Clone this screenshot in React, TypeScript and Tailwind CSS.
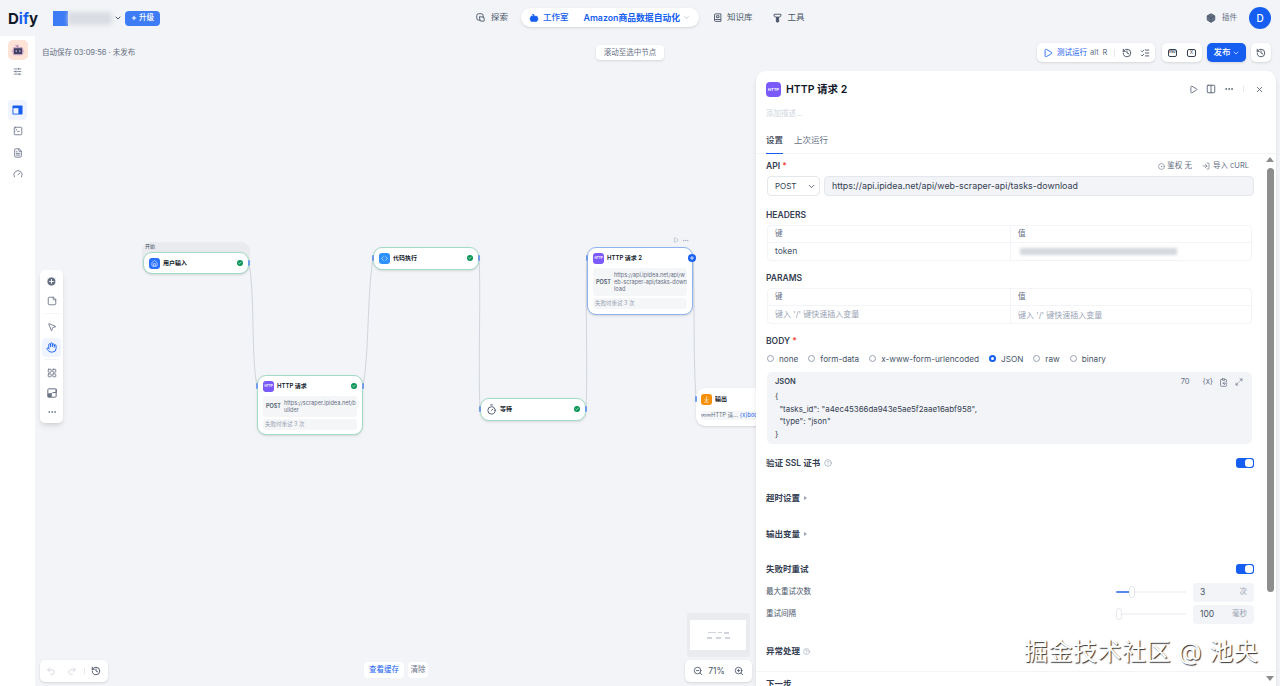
import {
  Bot,
  Box,
  Check,
  ChevronDown,
  CircleDot,
  CircleHelp,
  CirclePlus,
  ClipboardCopy,
  Code,
  Columns2,
  Ellipsis,
  FileText,
  Gauge,
  Hand,
  History,
  House,
  LayoutGrid,
  ListChecks,
  LogIn,
  Maximize2,
  MousePointer2,
  Play,
  Plus,
  Redo2,
  SlidersHorizontal,
  SquareTerminal,
  StickyNote,
  Timer,
  Undo2,
  X,
  ZoomIn,
  ZoomOut,
  ArrowDownToLine,
} from 'lucide-react';

function StatusDot() {
  return (
    <span className="flex h-[6px] w-[6px] shrink-0 items-center justify-center rounded-full bg-[#079455]">
      <Check size={4} strokeWidth={4} className="text-white" />
    </span>
  );
}

function Port({ className }: { className: string }) {
  return <span className={`absolute h-[6px] w-[2px] rounded-sm bg-[#6f9be8] ${className}`} />;
}

function HttpIcon() {
  return (
    <span className="flex h-[11px] w-[11px] shrink-0 items-center justify-center rounded-[3px] bg-[#7a5af8] text-[3px] font-bold text-white">
      HTTP
    </span>
  );
}

function NodeTitle({ icon, title, dot = true }: { icon: React.ReactNode; title: string; dot?: boolean }) {
  return (
    <div className="flex h-[20px] items-center px-[5px]">
      {icon}
      <span className="ml-[3px] flex-1 truncate text-[6px] leading-none font-semibold text-[#101828]">{title}</span>
      {dot && <StatusDot />}
    </div>
  );
}

function HttpBody({ url }: { url: string }) {
  return (
    <div className="px-[5px]">
      <div className="flex items-center gap-[3px] rounded-[3px] bg-[#f5f6f8] py-[3.5px] pl-[3px]">
        <span className="text-[5.5px] font-semibold text-[#475467]">POST</span>
        <span className="min-w-0 flex-1 break-all text-[5.6px] leading-[7px] text-[#667085]">{url}</span>
      </div>
      <div className="mt-[2px] flex h-[11px] items-center rounded-[3px] bg-[#f5f6f8] px-[2px] text-[5.5px] text-[#98a2b3]">
        失败时重试 3 次
      </div>
    </div>
  );
}

function ExploreIcon() {
  return (
    <svg width="9" height="9" viewBox="0 0 12 12" fill="none" stroke="currentColor" strokeWidth="1.2">
      <rect x="1" y="1" width="8.5" height="8.5" rx="2.5" />
      <path d="M4.5 5 L10.5 5.5 L11 10 Q11 11 10 11 L5.5 10.5 Z" fill="#f2f4f7" />
    </svg>
  );
}

function BookIcon() {
  return (
    <svg width="9" height="10" viewBox="0 0 12 13" fill="none" stroke="currentColor" strokeWidth="1.2">
      <path d="M2 2.5 Q2 1 3.5 1 H10.5 V11 H3.5 Q2 11 2 9.5 Z" />
      <path d="M2 9.5 Q2 8.5 3.5 8.5 H10.5" />
      <path d="M4.5 3.5 H8 V6 H4.5 Z" />
    </svg>
  );
}

function ToolIcon() {
  return (
    <svg width="9" height="10" viewBox="0 0 12 13" fill="none" stroke="currentColor" strokeWidth="1.2">
      <path d="M1.5 1.5 H10.5 V4 L8 5.5 H4 L1.5 4 Z" />
      <path d="M4.5 5.5 H7.5 V11.5 Q6 12.5 4.5 11.5 Z" fill="currentColor" />
    </svg>
  );
}

function AppWindowIcon() {
  return (
    <svg width="11" height="10" viewBox="0 0 12 11">
      <rect x="0.5" y="0.5" width="11" height="10" rx="1" fill="#155eef" />
      <rect x="1.5" y="3.5" width="5.5" height="6" fill="#eff4ff" />
    </svg>
  );
}

function MinimapIcon() {
  return (
    <svg width="10" height="10" viewBox="0 0 12 12" fill="none" stroke="currentColor" strokeWidth="1.2">
      <rect x="1" y="1" width="10" height="10" rx="1" />
      <path d="M6.5 5.5 H11 V1 M1 11 L6 6" />
      <path d="M1.5 10.5 V7 H5 V10.5 Z" fill="currentColor" />
    </svg>
  );
}

function Canvas() {
  const nodeBase = 'absolute w-[106px] rounded-[9px] border-[1.5px] border-[#a3dcc6] bg-white shadow-sm';
  return (
    <>
      {/* edges */}
      <svg className="absolute left-0 top-0 h-[650px] w-[760px]" viewBox="0 0 760 650" fill="none">
        <g stroke="#d0d5dd" strokeWidth="1">
          <path d="M214 227 C220 260 216 320 222 350" />
          <path d="M328 350 C334 320 332 260 338 222" />
          <path d="M444 222 C446 260 443 330 445 373" />
          <path d="M551 373 C553 330 550 260 552 222" />
          <path d="M658 222 C660 270 658 320 661 362" />
        </g>
      </svg>

      {/* 开始 */}
      <div className="absolute left-[107px] top-[206px] h-[32px] w-[108px] rounded-[9px] bg-[#e9ebef]">
        <span className="absolute left-[3px] top-[1px] text-[5px] leading-[7px] text-[#475467]">开始</span>
      </div>
      <div className={`${nodeBase} left-[108px] top-[216px] h-[22px]`}>
        <NodeTitle
          title="用户输入"
          icon={
            <span className="flex h-[11px] w-[11px] items-center justify-center rounded-[3px] bg-[#2970ff]">
              <House size={7} className="text-white" />
            </span>
          }
        />
        <Port className="right-[-2px] top-[7px]" />
      </div>

      <div className={`${nodeBase} left-[222px] top-[339px] h-[60px]`}>
        <NodeTitle title="HTTP 请求" icon={<HttpIcon />} />
        <HttpBody url="https://scraper.ipidea.net/builder" />
        <Port className="left-[-2px] top-[7px]" />
        <Port className="right-[-2px] top-[7px]" />
      </div>

      <div className={`${nodeBase} left-[338px] top-[211px] h-[23px]`}>
        <NodeTitle
          title="代码执行"
          icon={
            <span className="flex h-[11px] w-[11px] items-center justify-center rounded-[3px] bg-[#2e90fa]">
              <Code size={7} className="text-white" />
            </span>
          }
        />
        <Port className="left-[-2px] top-[7px]" />
        <Port className="right-[-2px] top-[7px]" />
      </div>

      <div className={`${nodeBase} left-[445px] top-[362px] h-[23px]`}>
        <NodeTitle title="等待" icon={<Timer size={11} className="text-[#475467]" />} />
        <Port className="left-[-2px] top-[7px]" />
        <Port className="right-[-2px] top-[7px]" />
      </div>

      {/* selected node */}
      <div className="absolute left-[638px] top-[201px] flex h-[6px] items-center gap-[3px] text-[#98a2b3]">
        <Play size={6} />
        <Ellipsis size={7} />
      </div>
      <div className="absolute left-[552px] top-[211px] h-[68px] w-[106px] rounded-[9px] border-[1.5px] border-[#8fb3f0] bg-white shadow-sm">
        <NodeTitle title="HTTP 请求 2" icon={<HttpIcon />} dot={false} />
        <HttpBody url="https://api.ipidea.net/api/web-scraper-api/tasks-download" />
        <Port className="left-[-2px] top-[7px]" />
        <span className="absolute right-[-4px] top-[6px] flex h-[8px] w-[8px] items-center justify-center rounded-full bg-[#155eef]">
          <Plus size={6} strokeWidth={3} className="text-white" />
        </span>
      </div>

      {/* output node, runs under the panel */}
      <div className="absolute left-[661px] top-[352px] h-[38px] w-[70px] rounded-[9px] bg-white pt-px shadow-sm">
        <NodeTitle
          title="输出"
          dot={false}
          icon={
            <span className="flex h-[11px] w-[11px] items-center justify-center rounded-[3px] bg-[#f79009]">
              <ArrowDownToLine size={7} className="text-white" />
            </span>
          }
        />
        <div className="mx-[5px] mt-[2px] flex h-[9px] items-center gap-[2px] overflow-hidden whitespace-nowrap rounded-[2px] bg-[#f5f6f8] text-[5.5px] text-[#667085]">
          <span>∞∞HTTP 请...</span>
          <span className="text-[#155eef]">{'{x}'}body</span>
        </div>
        <Port className="left-[-1px] top-[8px]" />
      </div>

      {/* auto save */}
      <div className="absolute left-[7px] top-[12px] text-[7.5px] leading-[10px] text-[#667085]">自动保存 03:09:56 · 未发布</div>

      {/* scroll to selected */}
      <div className="absolute left-[561px] top-[9px] flex h-[15px] w-[68px] items-center justify-center rounded-[4px] bg-white text-[7.5px] text-[#667085] shadow-sm">
        滚动至选中节点
      </div>

      {/* run buttons */}
      <div className="absolute left-[1002px] top-[7px] flex items-center gap-[5px]">
        <div className="flex h-[19px] w-[118px] items-center rounded-[5px] bg-white pl-[6px] shadow-sm">
          <Play size={10} className="text-[#155eef]" />
          <span className="ml-[4px] text-[7.5px] text-[#155eef]">测试运行</span>
          <span className="ml-[3px] text-[7.5px] text-[#667085]">alt</span>
          <span className="ml-[4px] text-[7.5px] text-[#667085]">R</span>
          <span className="mx-[7px] h-[8px] w-px bg-[#e4e7ec]" />
          <History size={10} className="text-[#354052]" />
          <ListChecks size={10} className="ml-[8px] text-[#354052]" />
        </div>
        <div className="ml-[2px] flex h-[19px] w-[40px] items-center justify-center gap-[10px] rounded-[5px] bg-white shadow-sm">
          <span className="flex h-[8px] w-[9px] items-center justify-center rounded-[2px] border border-[#354052] text-[3px] font-bold text-[#354052]">
            ENV
          </span>
          <span className="flex h-[8px] w-[9px] items-center justify-center rounded-[2px] border border-[#354052] text-[5px] text-[#354052]">
            X
          </span>
        </div>
        <div className="flex h-[19px] w-[39px] items-center justify-center gap-[1px] rounded-[5px] bg-[#155eef] text-[8.5px] font-medium text-white shadow-sm">
          发布
          <ChevronDown size={8} />
        </div>
        <div className="flex h-[19px] w-[20px] items-center justify-center rounded-[5px] bg-white shadow-sm">
          <History size={10} className="text-[#354052]" />
        </div>
      </div>

      {/* left tools */}
      <div className="absolute left-[5px] top-[234px] flex w-[23px] flex-col items-center rounded-[5px] bg-white py-px text-[#676f83] shadow-md">
        <div className="flex h-[20px] items-center justify-center">
          <CirclePlus size={11} fill="#676f83" stroke="white" />
        </div>
        <div className="flex h-[20px] items-center justify-center">
          <StickyNote size={10} strokeDasharray="3 1.5" />
        </div>
        <div className="my-[2px] h-px w-[14px] bg-[#f2f4f7]" />
        <div className="flex h-[22px] items-center justify-center">
          <MousePointer2 size={10} />
        </div>
        <div className="flex h-[19px] w-[19px] items-center justify-center rounded-[4px] bg-[#eff4ff]">
          <Hand size={11} className="text-[#155eef]" />
        </div>
        <div className="my-[2px] h-px w-[14px] bg-[#f2f4f7]" />
        <div className="flex h-[21px] items-center justify-center">
          <LayoutGrid size={10} />
        </div>
        <div className="flex h-[19px] items-center justify-center">
          <MinimapIcon />
        </div>
        <div className="flex h-[20px] items-center justify-center">
          <Ellipsis size={10} />
        </div>
      </div>

      {/* undo bar */}
      <div className="absolute left-[5px] top-[624px] flex h-[22px] w-[68px] items-center rounded-[5px] bg-white pl-[6px] shadow-sm">
        <Undo2 size={10} className="text-[#d0d5dd]" />
        <Redo2 size={10} className="ml-[11px] text-[#d0d5dd]" />
        <span className="ml-[7px] h-[6px] w-px bg-[#e4e7ec]" />
        <History size={10} className="ml-[6px] text-[#354052]" />
      </div>

      {/* cache */}
      <div className="absolute left-[329px] top-[626px] flex items-center gap-[4px] text-[7.5px]">
        <span className="flex h-[16px] w-[40px] items-center justify-center rounded-[4px] bg-white text-[#155eef]">查看缓存</span>
        <span className="flex h-[16px] w-[20px] items-center justify-center rounded-[4px] bg-white text-[#667085]">清除</span>
      </div>

      {/* minimap + zoom */}
      <div className="absolute left-[652px] top-[577px] h-[44px] w-[63px] rounded-[3px] bg-[#e9ebef]" />
      <div className="absolute left-[655px] top-[584px] flex h-[30px] w-[56px] flex-col items-center justify-center gap-[3px] bg-white">
        <div className="flex gap-[2px]">
          <span className="h-[1px] w-[8px] bg-[#d0d5dd]" />
          <span className="h-[1px] w-[4px] bg-[#d0d5dd]" />
          <span className="h-[2px] w-[5px] bg-[#d0d5dd]" />
        </div>
        <div className="flex gap-[4px]">
          <span className="h-[2px] w-[5px] bg-[#d0d5dd]" />
          <span className="h-[2px] w-[5px] bg-[#d0d5dd]" />
          <span className="h-[2px] w-[5px] bg-[#d0d5dd]" />
        </div>
      </div>
      <div className="absolute left-[650px] top-[624px] flex h-[22px] w-[67px] items-center justify-center gap-[5px] rounded-[5px] bg-white text-[8.5px] text-[#475467] shadow-sm">
        <ZoomOut size={10} />
        <span>71%</span>
        <ZoomIn size={10} className="ml-[4px]" />
      </div>
    </>
  );
}

function FieldLabel({ children, className = '' }: { children: React.ReactNode; className?: string }) {
  return <div className={`text-[8.5px] leading-[12px] font-semibold text-[#354052] ${className}`}>{children}</div>;
}

function KvTable({ rows }: { rows: React.ReactNode }) {
  return (
    <div className="mt-[4px] ml-px w-[485px] rounded-[4px] border border-[#f2f4f7] text-[8.5px]">
      <div className="flex h-[17px] items-center border-b border-[#f2f4f7] text-[7.5px] text-[#667085]">
        <span className="w-[243px] border-r border-[#f2f4f7] pl-[7px] leading-[16px]">键</span>
        <span className="pl-[7px]">值</span>
      </div>
      {rows}
    </div>
  );
}

function Radio({ label, on = false }: { label: string; on?: boolean }) {
  return (
    <div className="flex items-center gap-[5px]">
      <span
        className={`h-[7px] w-[7px] rounded-full border ${on ? 'border-[2px] border-[#155eef] bg-white' : 'border-[#98a2b3]'}`}
      />
      <span className="text-[8.2px] leading-none text-[#475467]">{label}</span>
    </div>
  );
}

function Toggle() {
  return (
    <span className="flex h-[10px] w-[18px] items-center justify-end rounded-[3px] bg-[#155eef] pr-px">
      <span className="h-[8px] w-[8px] rounded-[3px] bg-white" />
    </span>
  );
}

function SliderRow({
  label,
  value,
  unit,
  fill,
  thumb,
}: {
  label: string;
  value: string;
  unit: string;
  fill: string;
  thumb: string;
}) {
  return (
    <div className="flex h-[22px] items-center">
      <span className="flex-1 text-[7.5px] text-[#475467]">{label}</span>
      <div className="relative mr-[7px] h-[2px] w-[70px] rounded-full bg-[#f2f4f7]">
        <div className={`absolute left-0 top-0 h-[2px] rounded-full bg-[#5a86e8] ${fill}`} />
        <span className={`absolute top-[-5px] h-[12px] w-[6px] rounded-[3px] border border-[#e4e7ec] bg-white ${thumb}`} />
      </div>
      <div className="flex h-[19px] w-[61px] items-center justify-between rounded-[4px] bg-[#f2f4f7] px-[7px] text-[8.5px] text-[#475467]">
        <span>{value}</span>
        <span className="text-[7.5px] text-[#98a2b3]">{unit}</span>
      </div>
    </div>
  );
}

function Panel() {
  return (
    <div className="absolute bottom-0 left-[721px] top-[35px] flex w-[520px] flex-col overflow-hidden rounded-t-[10px] bg-white shadow-md">
      <div className="flex h-[26px] shrink-0 items-end px-[10px]">
        <span className="flex h-[15px] w-[15px] items-center justify-center rounded-[4px] bg-[#7a5af8] text-[4px] font-bold text-white">
          HTTP
        </span>
        <span className="ml-[5px] text-[10.5px] leading-[15px] font-semibold text-[#101828]">HTTP 请求 2</span>
        <div className="ml-auto flex items-center pb-[3px] text-[#475467]">
          <Play size={9} />
          <Columns2 size={10} className="ml-[8px]" />
          <Ellipsis size={10} className="ml-[8px]" />
          <span className="ml-[9px] h-[6px] w-px bg-[#e4e7ec]" />
          <X size={9} className="ml-[11px] mr-[2px]" />
        </div>
      </div>
      <div className="mt-[11px] h-[12px] shrink-0 px-[10px] text-[7.5px] leading-[12px] text-[#d0d5dd]">添加描述...</div>
      <div className="mt-[12px] flex h-[22px] shrink-0 gap-[11px] border-b border-[#f2f4f7] px-[10px] text-[8.5px] leading-[14px]">
        <span className="h-[22px] border-b border-[#155eef] pt-px font-medium text-[#354052]">设置</span>
        <span className="pt-px text-[#667085]">上次运行</span>
      </div>

      <div className="relative min-h-0 flex-1 overflow-hidden pl-[10px] pr-[22px]">
        <div className="mt-[6px] flex h-[12px] items-center">
          <FieldLabel>
            API <span className="text-[#f04438]">*</span>
          </FieldLabel>
          <div className="ml-auto mr-[5px] flex items-center text-[7.5px] text-[#667085]">
            <CircleDot size={7} />
            <span className="ml-[2px]">鉴权 无</span>
            <LogIn size={8} className="ml-[10px]" />
            <span className="ml-[3px]">导入 cURL</span>
          </div>
        </div>
        <div className="mt-[4px] flex gap-[4px] pl-px">
          <div className="flex h-[20px] w-[53px] items-center justify-between rounded-[4px] border border-[#e4e7ec] pl-[7px] pr-[3px] text-[8px] text-[#354052]">
            POST
            <ChevronDown size={9} />
          </div>
          <div className="flex h-[20px] w-[430px] items-center rounded-[4px] border border-[#e4e7ec] bg-[#f2f4f7] pl-[7px] text-[8.9px] text-[#354052]">
            https://api.ipidea.net/api/web-scraper-api/tasks-download
          </div>
        </div>

        <FieldLabel className="mt-[13px]">HEADERS</FieldLabel>
        <KvTable
          rows={
            <div className="flex h-[17px] items-center text-[#475467]">
              <span className="w-[243px] border-r border-[#f2f4f7] pl-[7px] leading-[17px]">token</span>
              <div className="ml-[9px] h-[7px] w-[157px] bg-[#d5d8dd] blur-[1.5px]" />
            </div>
          }
        />

        <FieldLabel className="mt-[11px]">PARAMS</FieldLabel>
        <KvTable
          rows={
            <div className="flex h-[17px] items-center text-[8px] text-[#98a2b3]">
              <span className="w-[243px] border-r border-[#f2f4f7] pl-[7px] leading-[17px]">键入 '/' 键快速插入变量</span>
              <span className="pl-[7px]">键入 '/' 键快速插入变量</span>
            </div>
          }
        />

        <FieldLabel className="mt-[11px]">
          BODY <span className="text-[#f04438]">*</span>
        </FieldLabel>
        <div className="mt-[6px] flex h-[12px] items-center gap-[10px] pl-px">
          <Radio label="none" />
          <Radio label="form-data" />
          <Radio label="x-www-form-urlencoded" />
          <Radio label="JSON" on />
          <Radio label="raw" />
          <Radio label="binary" />
        </div>
        <div className="mt-[7px] ml-px h-[72px] w-[485px] rounded-[5px] bg-[#f2f4f7] px-[8px] pt-[4px]">
          <div className="flex h-[12px] items-center">
            <span className="text-[7.5px] font-semibold text-[#354052]">JSON</span>
            <div className="ml-auto flex items-center text-[#667085]">
              <span className="text-[7.5px]">70</span>
              <span className="ml-[13px] text-[7.5px]">{'{x}'}</span>
              <ClipboardCopy size={9} className="ml-[6px]" />
              <Maximize2 size={8} className="ml-[7px] mr-[1px]" />
            </div>
          </div>
          <pre className="mt-[2px] text-[7.9px] leading-[12.7px] text-[#354052] [font-family:inherit]">
            {'{\n  "tasks_id": "a4ec45366da943e5ae5f2aae16abf958",\n  "type": "json"\n}'}
          </pre>
        </div>

        <div className="mt-[12px] flex h-[14px] items-center">
          <FieldLabel>验证 SSL 证书</FieldLabel>
          <CircleHelp size={8} className="ml-[4px] text-[#98a2b3]" />
          <span className="ml-auto">
            <Toggle />
          </span>
        </div>
        <div className="mt-[21px] flex h-[14px] items-center">
          <FieldLabel>超时设置</FieldLabel>
          <span className="ml-[4px] h-0 w-0 border-y-[2.5px] border-l-[3px] border-y-transparent border-l-[#98a2b3]" />
        </div>
        <div className="mt-[22px] flex h-[14px] items-center">
          <FieldLabel>输出变量</FieldLabel>
          <span className="ml-[4px] h-0 w-0 border-y-[2.5px] border-l-[3px] border-y-transparent border-l-[#98a2b3]" />
        </div>
        <div className="mt-[21px] flex h-[14px] items-center">
          <FieldLabel>失败时重试</FieldLabel>
          <span className="ml-auto">
            <Toggle />
          </span>
        </div>
        <div className="mt-[5px]">
          <SliderRow label="最大重试次数" value="3" unit="次" fill="w-[14px]" thumb="left-[13px]" />
          <SliderRow label="重试间隔" value="100" unit="毫秒" fill="w-0" thumb="left-0" />
        </div>
        <div className="mt-[19px] flex h-[14px] items-center">
          <FieldLabel>异常处理</FieldLabel>
          <CircleHelp size={7} className="ml-[3px] text-[#98a2b3]" />
        </div>
        <div className="mt-[13px] -ml-[10px] -mr-[22px] border-t border-[#f2f4f7] pl-[10px] pt-[6px]">
          <FieldLabel>下一步</FieldLabel>
        </div>

        {/* scrollbar */}
        <div className="absolute bottom-0 right-0 top-0 flex w-[12px] flex-col items-center">
          <span className="mt-[3px] h-0 w-0 border-x-[4px] border-b-[5px] border-x-transparent border-b-[#8d8d8d]" />
          <span className="mt-[6px] h-[424px] w-[7px] rounded-full bg-[#8d8d8d]" />
          <span className="mt-auto mb-[5px] h-0 w-0 border-x-[4px] border-t-[5px] border-x-transparent border-t-[#8d8d8d]" />
        </div>
      </div>
    </div>
  );
}

export default function App() {
  const font = '[font-family:Inter,"Noto_Sans_CJK_SC",sans-serif]';
  return (
    <div className={`flex h-[686px] w-[1280px] flex-col overflow-hidden bg-[#f2f4f7] ${font}`}>
      {/* Top nav */}
      <header className="relative flex h-[36px] shrink-0 items-center">
        <span className="ml-[8px] text-[15px] leading-none font-bold text-[#101828]">
          D<span className="text-[#155eef]">if</span>y
        </span>
        <div className="ml-[15px] flex items-center">
          <span className="h-[15px] w-[15px] bg-[#3d7cf5]" />
          <span className="h-[13px] w-[44px] rounded-r-[4px] bg-[#d9dce2] blur-[2px]" />
        </div>
        <ChevronDown size={8} strokeWidth={3} className="ml-[2px] text-[#475467]" />
        <span className="ml-[3px] flex h-[15px] w-[35px] items-center justify-center gap-[2px] rounded-[4px] bg-[#3d7cf5] text-[7.5px] font-medium text-white">
          <Plus size={6} strokeWidth={4} />
          升级
        </span>

        <nav className="absolute left-[476px] top-[8px] flex h-[19px] items-center text-[8.5px] text-[#475467]">
          <ExploreIcon />
          <span className="ml-[6px]">探索</span>
          <div className="ml-[13px] flex h-[19px] w-[178px] items-center rounded-[9px] bg-white pl-[8px] font-medium text-[#155eef] shadow-sm">
            <Bot size={10} fill="#155eef" stroke="#155eef" />
            <span className="ml-[4px]">工作室</span>
            <span className="ml-[15px] text-[8.8px] font-semibold">Amazon商品数据自动化</span>
            <ChevronDown size={7} className="ml-[3px] text-[#98a2b3]" />
          </div>
          <span className="ml-[14px]">
            <BookIcon />
          </span>
          <span className="ml-[5px]">知识库</span>
          <span className="ml-[20px]">
            <ToolIcon />
          </span>
          <span className="ml-[6px]">工具</span>
        </nav>

        <div className="ml-auto flex items-center">
          <Box size={10} fill="#667085" stroke="#475467" />
          <span className="ml-[6px] text-[7.5px] text-[#667085]">插件</span>
          <span className="ml-[12px] mr-[9px] flex h-[22px] w-[22px] items-center justify-center rounded-full bg-[#155eef] text-[10px] font-medium text-white">
            D
          </span>
        </div>
      </header>

      <div className="flex min-h-0 flex-1">
        {/* App sidebar */}
        <aside className="flex w-[35px] shrink-0 flex-col items-center bg-white text-[#667085]">
          <div className="mt-[4px] flex h-[20px] w-[20px] items-center justify-center rounded-[5px] bg-[#fde4d6]">
            <Bot size={14} fill="#3b3f63" stroke="#c9a4c4" />
          </div>
          <SlidersHorizontal size={9} className="mt-[7px]" />
          <div className="mt-[24px] flex h-[20px] w-[19px] items-center justify-center rounded-[4px] bg-[#eff4ff]">
            <AppWindowIcon />
          </div>
          <SquareTerminal size={10} className="mt-[6px]" />
          <FileText size={10} className="mt-[12px]" />
          <Gauge size={10} className="mt-[11px]" />
        </aside>

        {/* Workflow canvas */}
        <main className="relative min-w-0 flex-1">
          <Canvas />
          <Panel />
        </main>
      </div>

      {/* watermark */}
      <div className="absolute left-[1024px] top-[636px] text-[24px] leading-[32px] tracking-[0.5px] text-white [text-shadow:1px_1px_1px_#333]">
        掘金技术社区 @ 池央
      </div>
    </div>
  );
}
